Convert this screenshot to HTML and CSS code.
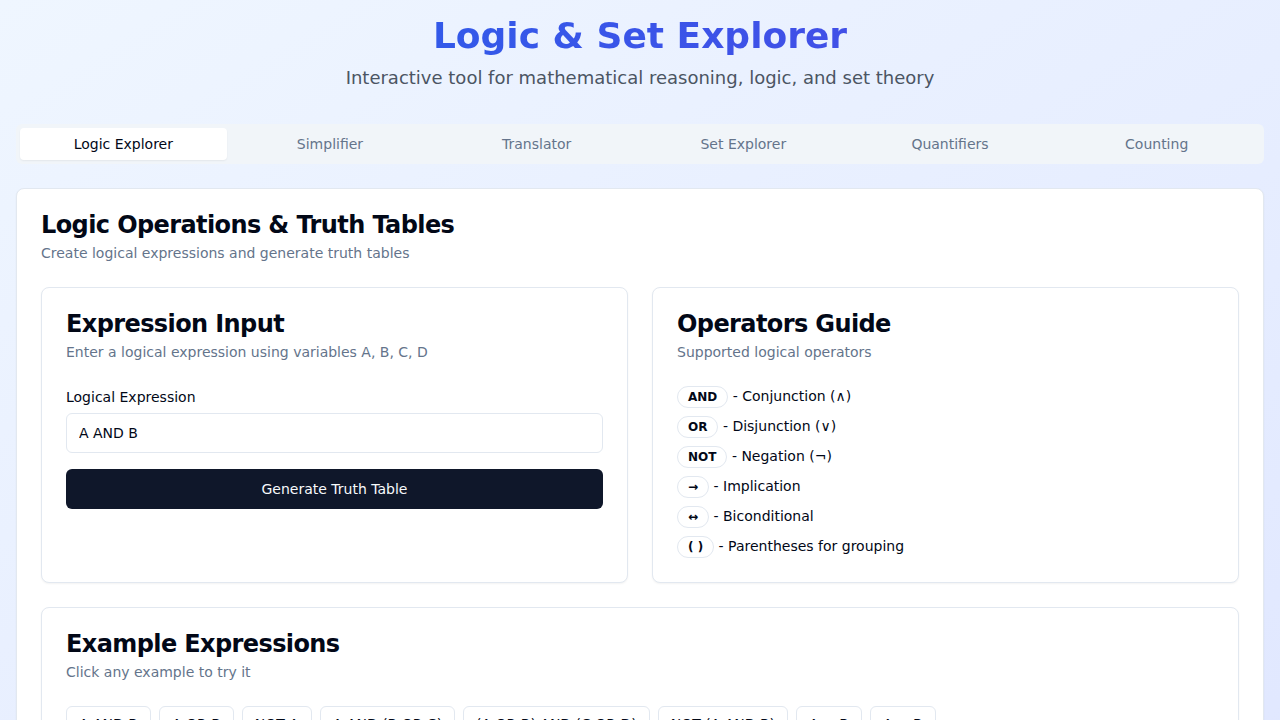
FILE: index.html
```html
<!DOCTYPE html>
<html lang="en">
<head>
<meta charset="utf-8">
<title>Logic &amp; Set Explorer</title>
<link rel="stylesheet" href="styles.css">
</head>
<body>
<div class="page">
  <header class="hero">
    <h1 class="hero-title">Logic &amp; Set Explorer</h1>
    <p class="hero-sub">Interactive tool for mathematical reasoning, logic, and set theory</p>
  </header>

  <nav class="tabs">
    <button class="tab active">Logic Explorer</button>
    <button class="tab">Simplifier</button>
    <button class="tab">Translator</button>
    <button class="tab">Set Explorer</button>
    <button class="tab">Quantifiers</button>
    <button class="tab">Counting</button>
  </nav>

  <section class="card main-card">
    <div class="card-header">
      <h2 class="card-title">Logic Operations &amp; Truth Tables</h2>
      <p class="card-desc">Create logical expressions and generate truth tables</p>
    </div>
    <div class="card-content stack">
      <div class="two-col">
        <div class="card">
          <div class="card-header">
            <h3 class="card-title">Expression Input</h3>
            <p class="card-desc">Enter a logical expression using variables A, B, C, D</p>
          </div>
          <div class="card-content">
            <label class="label" for="expr">Logical Expression</label>
            <input id="expr" class="input" type="text" value="A AND B">
            <button class="btn-primary">Generate Truth Table</button>
          </div>
        </div>
        <div class="card">
          <div class="card-header">
            <h3 class="card-title">Operators Guide</h3>
            <p class="card-desc">Supported logical operators</p>
          </div>
          <div class="card-content ops">
            <div class="op"><span class="badge">AND</span> - Conjunction (∧)</div>
            <div class="op"><span class="badge">OR</span> - Disjunction (∨)</div>
            <div class="op"><span class="badge">NOT</span> - Negation (¬)</div>
            <div class="op"><span class="badge">→</span> - Implication</div>
            <div class="op"><span class="badge">↔</span> - Biconditional</div>
            <div class="op"><span class="badge">( )</span> - Parentheses for grouping</div>
          </div>
        </div>
      </div>

      <div class="card">
        <div class="card-header">
          <h3 class="card-title">Example Expressions</h3>
          <p class="card-desc">Click any example to try it</p>
        </div>
        <div class="card-content examples">
          <button class="btn-outline">A AND B</button>
          <button class="btn-outline">A OR B</button>
          <button class="btn-outline">NOT A</button>
          <button class="btn-outline">A AND (B OR C)</button>
          <button class="btn-outline">(A OR B) AND (C OR D)</button>
          <button class="btn-outline">NOT (A AND B)</button>
          <button class="btn-outline">A → B</button>
          <button class="btn-outline">A ↔ B</button>
        </div>
      </div>
    </div>
  </section>
</div>
</body>
</html>
```

FILE: styles.css
```css
* { box-sizing: border-box; }
html { scrollbar-width: none; }
html::-webkit-scrollbar { display: none; }
body {
  margin: 0;
  font-family: "DejaVu Sans", "Liberation Sans", sans-serif;
  color: #020817;
  background: linear-gradient(to bottom right, #eff6ff, #e0e7ff);
  min-height: 100vh;
}
.page {
  max-width: 1280px;
  margin: 0 auto;
  padding: 16px;
}
.hero {
  text-align: center;
  margin-bottom: 32px;
}
.hero-title {
  margin: 0 0 8px;
  font-size: 36px;
  line-height: 40px;
  font-weight: 700;
  background: linear-gradient(to right, #2563eb, #4f46e5);
  -webkit-background-clip: text;
  background-clip: text;
  color: transparent;
}
.hero-sub {
  margin: 0;
  font-size: 18px;
  line-height: 28px;
  color: #4b5563;
}
.tabs {
  display: grid;
  grid-template-columns: repeat(6, 1fr);
  height: 40px;
  padding: 4px;
  background: #f1f5f9;
  border-radius: 6px;
  margin-bottom: 24px;
}
.tab {
  font: inherit;
  font-size: 14px;
  color: #64748b;
  background: transparent;
  border: 0;
  border-radius: 4px;
  padding: 6px 12px;
}
.tab.active {
  background: #ffffff;
  color: #020817;
  box-shadow: 0 1px 2px rgba(0, 0, 0, 0.06);
}
.card {
  background: #ffffff;
  border: 1px solid #e2e8f0;
  border-radius: 8px;
  box-shadow: 0 1px 2px rgba(0, 0, 0, 0.05);
}
.card-header {
  padding: 24px;
  display: flex;
  flex-direction: column;
  gap: 6px;
}
.card-title {
  margin: 0;
  font-size: 24px;
  line-height: 24px;
  font-weight: 700;
  letter-spacing: -0.6px;
}
.card-desc {
  margin: 0;
  font-size: 14px;
  line-height: 20px;
  color: #64748b;
}
.card-content {
  padding: 0 24px 24px;
}
.stack {
  display: flex;
  flex-direction: column;
  gap: 24px;
}
.two-col {
  display: grid;
  grid-template-columns: 1fr 1fr;
  gap: 24px;
}
.label {
  display: block;
  font-size: 14px;
  line-height: 22px;
  font-weight: 500;
  margin-bottom: 5px;
}
.input {
  display: block;
  width: 100%;
  height: 40px;
  font: inherit;
  font-size: 14px;
  color: #020817;
  padding: 8px 12px;
  border: 1px solid #e2e8f0;
  border-radius: 6px;
  background: #ffffff;
  margin-bottom: 16px;
}
.btn-primary {
  display: block;
  width: 100%;
  height: 40px;
  font: inherit;
  font-size: 14px;
  color: #f8fafc;
  background: #0f172a;
  border: 0;
  border-radius: 6px;
}
.ops {
  display: flex;
  flex-direction: column;
  gap: 8px;
}
.op {
  font-size: 14px;
  line-height: 21px;
  white-space: pre;
}
.badge {
  display: inline-block;
  vertical-align: top;
  font-size: 12px;
  line-height: 16px;
  font-weight: 700;
  padding: 2px 10px;
  border: 1px solid #e2e8f0;
  border-radius: 999px;
  background: #ffffff;
}
.examples {
  display: flex;
  flex-wrap: wrap;
  gap: 8px;
}
.btn-outline {
  font: inherit;
  font-size: 14px;
  height: 36px;
  padding: 0 12px;
  color: #020817;
  background: #ffffff;
  border: 1px solid #e2e8f0;
  border-radius: 6px;
}
```
